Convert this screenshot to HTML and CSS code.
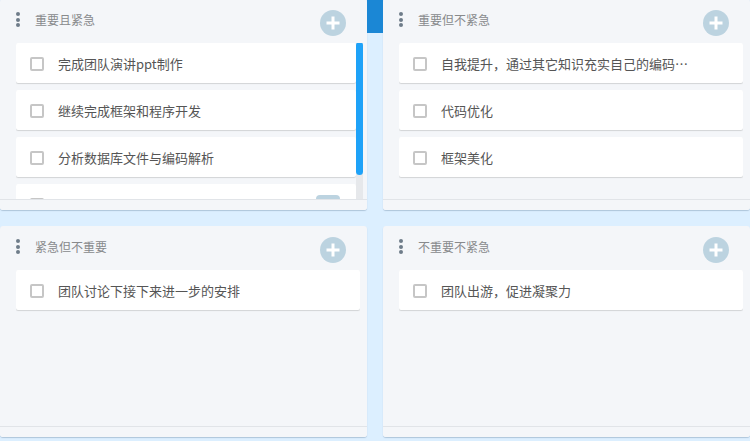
FILE: index.html
```html
<!DOCTYPE html>
<html lang="zh">
<head>
<meta charset="utf-8">
<title>四象限</title>
<link rel="stylesheet" href="styles.css">
</head>
<body>
<div class="tab-marker"></div>
<div class="board">
  <section class="panel">
    <header class="panel-head">
      <span class="dots"><i></i><i></i><i></i></span>
      <span class="panel-title">重要且紧急</span>
      <span class="add"><svg viewBox="0 0 26 26" width="26" height="26"><circle cx="13" cy="13" r="13" fill="#bcd3e0"/><path d="M13 6.5v13M6.5 13h13" stroke="#fff" stroke-width="3"/></svg></span>
    </header>
    <div class="list list-scroll">
      <div class="list-cards">
        <div class="card"><span class="check"></span><span class="text">完成团队演讲ppt制作</span></div>
        <div class="card"><span class="check"></span><span class="text">继续完成框架和程序开发</span></div>
        <div class="card"><span class="check"></span><span class="text">分析数据库文件与编码解析</span></div>
        <div class="card"><span class="check"></span><span class="text">社会不开始使用用户审核</span><span class="badge"></span></div>
      </div>
      <div class="scrollbar"><div class="thumb"></div></div>
    </div>
    <footer class="panel-foot"></footer>
  </section>

  <section class="panel">
    <header class="panel-head">
      <span class="dots"><i></i><i></i><i></i></span>
      <span class="panel-title">重要但不紧急</span>
      <span class="add"><svg viewBox="0 0 26 26" width="26" height="26"><circle cx="13" cy="13" r="13" fill="#bcd3e0"/><path d="M13 6.5v13M6.5 13h13" stroke="#fff" stroke-width="3"/></svg></span>
    </header>
    <div class="list">
      <div class="list-cards">
        <div class="card"><span class="check"></span><span class="text">自我提升，通过其它知识充实自己的编码能力</span></div>
        <div class="card"><span class="check"></span><span class="text">代码优化</span></div>
        <div class="card"><span class="check"></span><span class="text">框架美化</span></div>
      </div>
    </div>
    <footer class="panel-foot"></footer>
  </section>

  <section class="panel">
    <header class="panel-head">
      <span class="dots"><i></i><i></i><i></i></span>
      <span class="panel-title">紧急但不重要</span>
      <span class="add"><svg viewBox="0 0 26 26" width="26" height="26"><circle cx="13" cy="13" r="13" fill="#bcd3e0"/><path d="M13 6.5v13M6.5 13h13" stroke="#fff" stroke-width="3"/></svg></span>
    </header>
    <div class="list">
      <div class="list-cards">
        <div class="card"><span class="check"></span><span class="text">团队讨论下接下来进一步的安排</span></div>
      </div>
    </div>
    <footer class="panel-foot"></footer>
  </section>

  <section class="panel">
    <header class="panel-head">
      <span class="dots"><i></i><i></i><i></i></span>
      <span class="panel-title">不重要不紧急</span>
      <span class="add"><svg viewBox="0 0 26 26" width="26" height="26"><circle cx="13" cy="13" r="13" fill="#bcd3e0"/><path d="M13 6.5v13M6.5 13h13" stroke="#fff" stroke-width="3"/></svg></span>
    </header>
    <div class="list">
      <div class="list-cards">
        <div class="card"><span class="check"></span><span class="text">团队出游，促进凝聚力</span></div>
      </div>
    </div>
    <footer class="panel-foot"></footer>
  </section>
</div>
</body>
</html>
```

FILE: styles.css
```css
* { box-sizing: border-box; }

html, body {
  margin: 0;
  padding: 0;
}

body {
  background: #dcefff;
  font-family: "Noto Sans CJK SC", "Noto Sans", "Liberation Sans", sans-serif;
  width: 750px;
  height: 441px;
  overflow: hidden;
  position: relative;
}

.tab-marker {
  position: absolute;
  left: 367px;
  top: 0;
  width: 16px;
  height: 33px;
  background: #1b87d5;
}

.board {
  display: grid;
  grid-template-columns: 367px 367px;
  grid-auto-rows: 211px;
  column-gap: 16px;
  row-gap: 16px;
  margin-top: -1px;
}

.panel {
  display: flex;
  flex-direction: column;
  background: #f4f6f9;
  border-radius: 3px;
  box-shadow: 0 1px 1px rgba(90, 120, 150, 0.35);
  overflow: hidden;
}

.panel-head {
  height: 44px;
  flex: none;
  display: flex;
  align-items: flex-start;
  padding-left: 16px;
  padding-right: 21px;
}

.dots {
  display: flex;
  flex-direction: column;
  gap: 1.5px;
  margin-top: 13px;
  width: 4px;
}

.dots i {
  display: block;
  width: 4px;
  height: 4px;
  border-radius: 50%;
  background: #6e7c8a;
}

.panel-title {
  margin-left: 15px;
  margin-top: 12px;
  font-size: 12px;
  line-height: 17px;
  color: #888a8c;
}

.add {
  margin-left: auto;
  margin-top: 11px;
  width: 26px;
  height: 26px;
  display: block;
}

.add svg { display: block; }

.list {
  flex: none;
  height: 156px;
  padding-left: 16px;
  padding-right: 7px;
  display: flex;
  overflow: hidden;
}

.list-cards {
  flex: 1;
  min-width: 0;
  overflow: hidden;
}

.list-scroll {
  padding-right: 4px;
}

.scrollbar {
  flex: none;
  width: 7px;
  height: 100%;
  background: #e6e8eb;
  margin-top: -1px;
  height: 157px;
}

.thumb {
  width: 7px;
  height: 133px;
  border-radius: 4px;
  background: #1ea2f8;
}

.card {
  height: 40px;
  margin-bottom: 7px;
  background: #fff;
  border-radius: 2px;
  box-shadow: 0 1px 1px rgba(0, 0, 0, 0.14);
  display: flex;
  align-items: center;
  padding-left: 14px;
  padding-right: 52px;
}

.check {
  flex: none;
  width: 14px;
  height: 14px;
  border: 2px solid #c6c6c6;
  border-radius: 2px;
  background: #fff;
  margin-top: 1px;
}

.text {
  margin-left: 14px;
  font-size: 13px;
  color: #555;
  white-space: nowrap;
  overflow: hidden;
  text-overflow: ellipsis;
  min-width: 0;
}

.badge {
  margin-left: auto;
  margin-right: -36px;
  flex: none;
  width: 24px;
  height: 18px;
  border-radius: 4px;
  background: #bcd3e0;
}

.panel-foot {
  flex: none;
  height: 11px;
  border-top: 1px solid #e1e4e8;
  background: #f4f6f9;
}
```
